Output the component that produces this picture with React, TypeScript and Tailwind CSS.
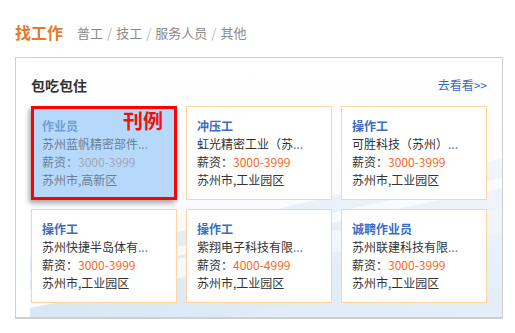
import React from "react";

type Job = {
  title: string;
  company: string;
  salary: string;
  location: string;
  highlight?: boolean;
};

const jobs: Job[] = [
  { title: "作业员", company: "苏州蓝帆精密部件", salary: "3000-3999", location: "苏州市,高新区", highlight: true },
  { title: "冲压工", company: "虹光精密工业（苏", salary: "3000-3999", location: "苏州市,工业园区" },
  { title: "操作工", company: "可胜科技（苏州）", salary: "3000-3999", location: "苏州市,工业园区" },
  { title: "操作工", company: "苏州快捷半岛体有", salary: "3000-3999", location: "苏州市,工业园区" },
  { title: "操作工", company: "紫翔电子科技有限", salary: "4000-4999", location: "苏州市,工业园区" },
  { title: "诚聘作业员", company: "苏州联建科技有限", salary: "3000-3999", location: "苏州市,工业园区" },
];

const font = { fontFamily: '"Noto Sans CJK SC", "Microsoft YaHei", sans-serif' };

function Card({ job }: { job: Job }) {
  if (job.highlight) {
    return (
      <div className="relative h-[94px] border-[3px] border-[#ff0000] bg-[#b6d9fb] pl-[8px] pt-[7px] shadow-[-2px_3px_5px_rgba(0,0,0,0.35)]">
        <div className="text-[12px] leading-[19px] font-bold text-[#6d9dd8]">{job.title}</div>
        <div className="text-[12px] leading-[18px] text-[#6a7e96]">
          {job.company}
          <span className="text-[#7d8fa8]">...</span>
        </div>
        <div className="text-[12px] leading-[18px] text-[#6a7e96]">
          薪资：<span className="text-[#a6a5b3]">{job.salary}</span>
        </div>
        <div className="text-[12px] leading-[18px] text-[#6a7e96]">{job.location}</div>
        <div className="absolute right-[11px] top-[1px] text-[20px] leading-[22px] font-bold text-[#f01010]">刊例</div>
      </div>
    );
  }
  return (
    <div className="h-[94px] border border-[#fcd69c] bg-white pl-[10px] pt-[9px]">
      <div className="text-[12px] leading-[19px] font-bold text-[#3a6cc4]">{job.title}</div>
      <div className="text-[12px] leading-[18px] text-[#333]">
        {job.company}
        <span className="text-[#4f7cc8]">...</span>
      </div>
      <div className="text-[12px] leading-[18px] text-[#333]">
        薪资：<span className="text-[#f26a24]">{job.salary}</span>
      </div>
      <div className="text-[12px] leading-[18px] text-[#333]">{job.location}</div>
    </div>
  );
}

function Sep() {
  return <span className="mx-[4px] text-[#b8b8b8]">/</span>;
}

export default function App() {
  return (
    <div className="w-[515px] h-[333px] bg-white overflow-hidden" style={font}>
      <div className="flex items-center pl-[15px] pt-[22px] h-[42px]">
        <span className="text-[16px] leading-[20px] font-bold text-[#e8782a]">找工作</span>
        <span className="ml-[14px] text-[13px] leading-[20px] text-[#8a8a8a] mt-[2px]">
          普工<Sep />技工<Sep />服务人员<Sep />其他
        </span>
      </div>
      <div className="relative ml-[15px] mt-[15px] w-[488px] h-[262px] border border-b-2 border-[#cfcfcf] bg-gradient-to-b from-white via-[#fbfcfe] to-[#eef4fb] overflow-hidden">
        <svg className="absolute inset-0" width="488" height="262" viewBox="0 0 488 262">
          <defs>
            <linearGradient id="w1" x1="0" y1="1" x2="1" y2="0">
              <stop offset="0" stopColor="#d3e3f4" />
              <stop offset="1" stopColor="#eef4fb" />
            </linearGradient>
            <linearGradient id="w2" x1="0" y1="0" x2="1" y2="0">
              <stop offset="0" stopColor="#ffffff" stopOpacity="0.9" />
              <stop offset="1" stopColor="#ffffff" stopOpacity="0.2" />
            </linearGradient>
          </defs>
          <path d="M14 262 L14 200 C120 190 250 150 488 100 L488 262 Z" fill="url(#w1)" opacity="0.8" />
          <path d="M14 232 C140 205 300 170 488 150 L488 175 C300 190 160 220 14 250 Z" fill="url(#w2)" />
          <path d="M14 215 C160 195 320 150 488 120 L488 130 C320 160 160 205 14 222 Z" fill="#ffffff" opacity="0.7" />
          <path d="M200 262 C300 240 400 225 488 222 L488 262 Z" fill="#e4eef9" opacity="0.7" />
          <rect x="0" y="0" width="14" height="262" fill="#ffffff" />
        </svg>
        <div className="relative flex items-start justify-between pl-[15px] pr-[15px] pt-[18px] h-[48px]">
          <span className="text-[14px] leading-[18px] font-bold text-[#333]">包吃包住</span>
          <span className="text-[12px] leading-[18px] text-[#3a6cc4]">去看看&gt;&gt;</span>
        </div>
        <div className="relative grid grid-cols-[146px_146px_146px] gap-x-[9px] gap-y-[9px] pl-[15px]">
          {jobs.map((j, i) => (
            <Card key={i} job={j} />
          ))}
        </div>
      </div>
    </div>
  );
}
